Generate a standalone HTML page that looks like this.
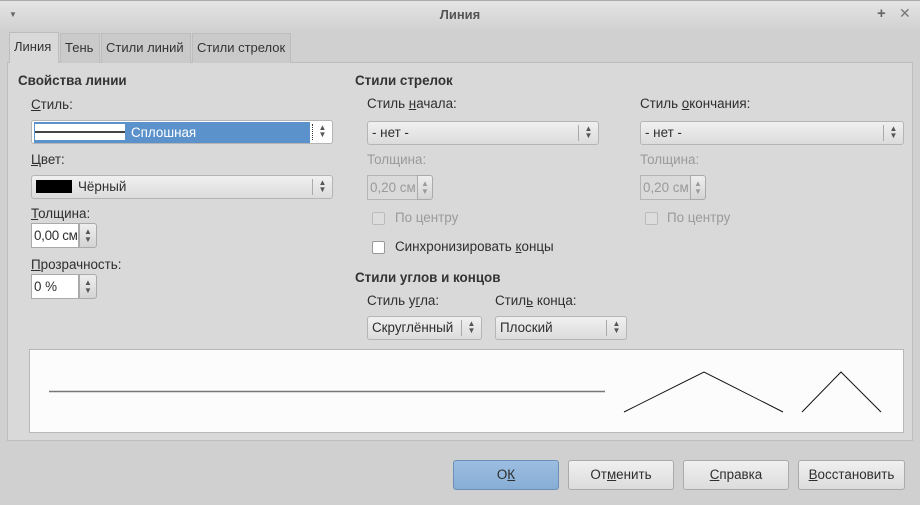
<!DOCTYPE html><html><head><meta charset="utf-8"><style>
*{box-sizing:border-box}
body{margin:0;width:920px;height:505px;background:#d0d0d0;font-family:"Liberation Sans","DejaVu Sans",sans-serif;font-size:13.4px;color:#2e2e2e;position:relative;overflow:hidden}
.a{position:absolute;white-space:nowrap}
.title{left:0;top:0;width:920px;height:29px;background:linear-gradient(#e4e4e4,#d2d2d2);border-top:1px solid #aaa;text-align:center;line-height:28px;color:#555;font-weight:bold;font-size:13px}
.panel{left:7px;top:62px;width:906px;height:379px;background:#d9d9d9;border:1px solid #bdbdbd}
.tab{top:33px;height:30px;background:#cacaca;border:1px solid #bdbdbd;border-bottom:none;line-height:28px;padding:0 4px;color:#333;font-size:13px}
.b{font-weight:bold;color:#333}
.sel{height:24px;border:1px solid #b5b5b5;border-radius:3px;background:linear-gradient(#f0f0f0,#dcdcdc);line-height:22px;padding-left:4px}
.sp{position:absolute;right:0;top:3px;width:20px;height:16px;border-left:1px solid #aaa;font-size:8px;line-height:7px;text-align:center;color:#555}
.in{height:25px;border:1px solid #aaa;background:#fff;line-height:23px;padding-left:2px}
.sb{height:25px;width:18px;border:1px solid #aaa;border-radius:0 3px 3px 0;background:linear-gradient(#eee,#d4d4d4);font-size:8px;line-height:8px;text-align:center;color:#555;padding-top:4px}
.dis{color:#9a9a9a}
.cb{width:13px;height:13px;border:1px solid #999;border-radius:2px;background:#fff}
.btn{top:460px;height:30px;border:1px solid #aaa;border-radius:3px;background:linear-gradient(#f0f0f0,#dcdcdc);text-align:center;line-height:28px}
u{text-decoration:underline}
</style></head><body>
<div class="a title">Линия</div>
<div class="a" style="left:9px;top:10px;font-size:8px;color:#666">▼</div>
<div class="a" style="left:877px;top:5px;font-size:15px;color:#666;font-weight:bold">+</div>
<div class="a" style="left:899px;top:5px;font-size:14px;color:#777">✕</div>
<div class="a panel"></div>
<div class="a tab" style="left:9px;top:32px;height:31px;background:#d9d9d9;width:50px">Линия</div>
<div class="a tab" style="left:60px;width:40px">Тень</div>
<div class="a tab" style="left:101px;width:90px">Стили линий</div>
<div class="a tab" style="left:192px;width:99px">Стили стрелок</div>

<div class="a b" style="left:18px;top:73px">Свойства линии</div>
<div class="a" style="left:31px;top:97px"><u>С</u>тиль:</div>
<div class="a sel" style="left:31px;top:120px;width:302px;padding:0;background:#fff">
 <div class="a" style="left:2px;top:1px;width:276px;height:21px;background:#5b92cb"></div>
 <div class="a" style="left:3px;top:3px;width:90px;height:16px;background:#fff"><div style="height:2px;background:#444;margin-top:7px"></div></div>
 <div class="a" style="left:99px;top:1px;color:#fff">Сплошная</div>
 <div class="sp" style="border-left:1px dotted #333">▲<br>▼</div></div>
<div class="a" style="left:31px;top:152px"><u>Ц</u>вет:</div>
<div class="a sel" style="left:31px;top:175px;width:302px"><span style="display:inline-block;width:36px;height:13px;background:#000;vertical-align:-2px;margin-right:6px"></span>Чёрный<div class="sp">▲<br>▼</div></div>
<div class="a" style="left:31px;top:206px"><u>Т</u>олщина:</div>
<div class="a in" style="left:31px;top:223px;width:48px;letter-spacing:-0.3px">0,00 см</div>
<div class="a sb" style="left:79px;top:223px">▲<br>▼</div>
<div class="a" style="left:31px;top:257px"><u>П</u>розрачность:</div>
<div class="a in" style="left:31px;top:274px;width:48px">0 %</div>
<div class="a sb" style="left:79px;top:274px">▲<br>▼</div>

<div class="a b" style="left:355px;top:73px">Стили стрелок</div>
<div class="a" style="left:367px;top:96px">Стиль <u>н</u>ачала:</div>
<div class="a sel" style="left:367px;top:121px;width:232px">- нет -<div class="sp">▲<br>▼</div></div>
<div class="a" style="left:640px;top:96px">Стиль <u>о</u>кончания:</div>
<div class="a sel" style="left:640px;top:121px;width:264px">- нет -<div class="sp">▲<br>▼</div></div>
<div class="a dis" style="left:367px;top:152px">Толщина:</div>
<div class="a in dis" style="left:367px;top:175px;width:51px;background:#dadada;border-color:#b5b5b5">0,20 см</div>
<div class="a sb dis" style="left:417px;top:175px;height:25px;width:16px">▲<br>▼</div>
<div class="a dis" style="left:640px;top:152px">Толщина:</div>
<div class="a in dis" style="left:640px;top:175px;width:51px;background:#dadada;border-color:#b5b5b5">0,20 см</div>
<div class="a sb dis" style="left:690px;top:175px;width:16px">▲<br>▼</div>
<div class="a cb" style="left:372px;top:212px;background:#ddd;border-color:#bbb"></div>
<div class="a dis" style="left:395px;top:210px">По центру</div>
<div class="a cb" style="left:645px;top:212px;background:#ddd;border-color:#bbb"></div>
<div class="a dis" style="left:667px;top:210px">По центру</div>
<div class="a cb" style="left:372px;top:241px"></div>
<div class="a" style="left:395px;top:239px">Синхронизировать <u>к</u>онцы</div>
<div class="a b" style="left:355px;top:270px">Стили углов и концов</div>
<div class="a" style="left:367px;top:293px">Стиль у<u>г</u>ла:</div>
<div class="a sel" style="left:367px;top:316px;width:115px">Скруглённый<div class="sp">▲<br>▼</div></div>
<div class="a" style="left:495px;top:293px">Стил<u>ь</u> конца:</div>
<div class="a sel" style="left:495px;top:316px;width:132px">Плоский<div class="sp">▲<br>▼</div></div>

<div class="a" style="left:29px;top:349px;width:875px;height:84px;background:#fcfcfc;border:1px solid #b8b8b8"></div>
<svg class="a" style="left:0;top:0" width="920" height="505"><line x1="49" y1="391.5" x2="605" y2="391.5" stroke="#777" stroke-width="1.5"/><polyline points="624,412 704,372 783,412" fill="none" stroke="#111" stroke-width="1"/><polyline points="802,412 841,372 881,412" fill="none" stroke="#111" stroke-width="1"/></svg>

<div class="a btn" style="left:453px;width:106px;background:linear-gradient(#9bbde0,#88aed6);border-color:#6b8fb8">О<u>К</u></div>
<div class="a btn" style="left:568px;width:106px">От<u>м</u>енить</div>
<div class="a btn" style="left:683px;width:106px"><u>С</u>правка</div>
<div class="a btn" style="left:798px;width:107px"><u>В</u>осстановить</div>
</body></html>
